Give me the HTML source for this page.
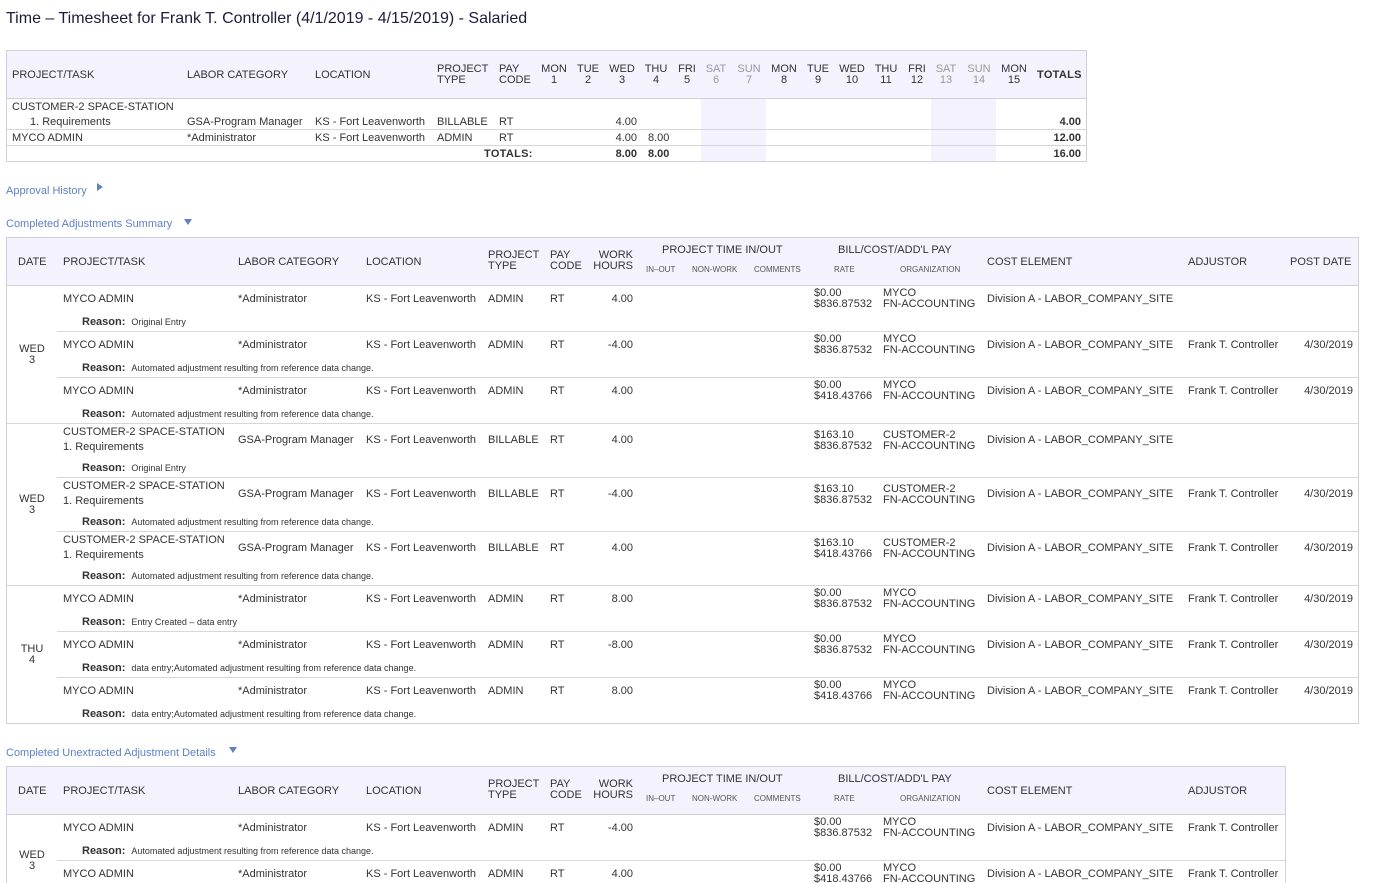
<!DOCTYPE html>
<html><head><meta charset="utf-8"><style>
html,body{margin:0;height:883px;overflow:hidden}
body{background:#fff;width:1378px;position:relative;font-family:"Liberation Sans",sans-serif;font-size:11px;color:#333}
div,span{position:absolute;white-space:nowrap}
.t{line-height:13px;margin-top:1px}
.box{border:1px solid #d0d0d8;box-sizing:border-box}
.hd{background:#f3f2fd;border-bottom:1px solid #d0d0d8}
.ln{height:1px;background:#d6d6dc}
.lk{color:#5f80c6;font-size:11px}
.tri{width:0;height:0}
.sm{font-size:8px;color:#555;margin-top:1px}
.r{left:0;width:1378px;height:46px}
.r span{line-height:13px;margin-top:1px}
.pt{left:63px}.lc{left:238px}.lo{left:366px}.ty{left:488px}.pc{left:550px}
.wh{left:583px;width:50px;text-align:right}
.rt{left:814px;line-height:11px!important}.og{left:883px;line-height:11px!important}
.ce{left:987px}.ad{left:1188px}.pd{left:1283px;width:70px;text-align:right}
.rs{left:82px;font-size:9px}.rs b{font-size:11px;margin-right:6px}
.dt{text-align:center;width:40px;left:12px;line-height:11px;margin-top:1px}
.h1 div{margin-top:2px}
</style></head><body>
<div class="t" style="left:6px;top:8px;font-size:16px;line-height:19px;color:#1c1c3c">Time – Timesheet for Frank T. Controller (4/1/2019 - 4/15/2019) - Salaried</div>

<!-- table 1 -->
<div class="box" style="left:6px;top:50px;width:1081px;height:112px"></div>
<div class="hd" style="left:7px;top:51px;width:1079px;height:47px"></div>
<div style="left:701px;top:99px;width:65px;height:62px;background:#f3f2fd"></div>
<div style="left:931px;top:99px;width:65px;height:62px;background:#f3f2fd"></div>
<div class="ln" style="left:7px;top:129px;width:1079px"></div>
<div class="ln" style="left:7px;top:145px;width:1079px"></div>
<div class="h1">
<div class="t" style="left:12px;top:67px">PROJECT/TASK</div>
<div class="t" style="left:187px;top:67px">LABOR CATEGORY</div>
<div class="t" style="left:315px;top:67px">LOCATION</div>
<div style="left:437px;top:62px;line-height:11px">PROJECT<br>TYPE</div>
<div style="left:499px;top:62px;line-height:11px">PAY<br>CODE</div>
<div style="left:534px;top:62px;width:40px;text-align:center;line-height:11px">MON<br>1</div>
<div style="left:568px;top:62px;width:40px;text-align:center;line-height:11px">TUE<br>2</div>
<div style="left:602px;top:62px;width:40px;text-align:center;line-height:11px">WED<br>3</div>
<div style="left:636px;top:62px;width:40px;text-align:center;line-height:11px">THU<br>4</div>
<div style="left:667px;top:62px;width:40px;text-align:center;line-height:11px">FRI<br>5</div>
<div style="left:696px;top:62px;width:40px;text-align:center;line-height:11px;color:#999">SAT<br>6</div>
<div style="left:729px;top:62px;width:40px;text-align:center;line-height:11px;color:#999">SUN<br>7</div>
<div style="left:764px;top:62px;width:40px;text-align:center;line-height:11px">MON<br>8</div>
<div style="left:798px;top:62px;width:40px;text-align:center;line-height:11px">TUE<br>9</div>
<div style="left:832px;top:62px;width:40px;text-align:center;line-height:11px">WED<br>10</div>
<div style="left:866px;top:62px;width:40px;text-align:center;line-height:11px">THU<br>11</div>
<div style="left:897px;top:62px;width:40px;text-align:center;line-height:11px">FRI<br>12</div>
<div style="left:926px;top:62px;width:40px;text-align:center;line-height:11px;color:#999">SAT<br>13</div>
<div style="left:959px;top:62px;width:40px;text-align:center;line-height:11px;color:#999">SUN<br>14</div>
<div style="left:994px;top:62px;width:40px;text-align:center;line-height:11px">MON<br>15</div>
<div class="t" style="left:1037px;top:67px;font-weight:bold;letter-spacing:.3px">TOTALS</div>
</div>
<div class="t" style="left:12px;top:100px">CUSTOMER-2 SPACE-STATION</div>
<div class="t" style="left:30px;top:115px">1. Requirements</div>
<div class="t" style="left:187px;top:115px">GSA-Program Manager</div>
<div class="t" style="left:315px;top:115px">KS - Fort Leavenworth</div>
<div class="t" style="left:437px;top:115px">BILLABLE</div>
<div class="t" style="left:499px;top:115px">RT</div>
<div class="t" style="left:597px;top:115px;width:40px;text-align:right">4.00</div>
<div class="t" style="left:1031px;top:115px;width:50px;text-align:right;font-weight:bold">4.00</div>
<div class="t" style="left:12px;top:131px">MYCO ADMIN</div>
<div class="t" style="left:187px;top:131px">*Administrator</div>
<div class="t" style="left:315px;top:131px">KS - Fort Leavenworth</div>
<div class="t" style="left:437px;top:131px">ADMIN</div>
<div class="t" style="left:499px;top:131px">RT</div>
<div class="t" style="left:597px;top:131px;width:40px;text-align:right">4.00</div>
<div class="t" style="left:648px;top:131px">8.00</div>
<div class="t" style="left:1031px;top:131px;width:50px;text-align:right;font-weight:bold">12.00</div>
<div class="t" style="left:484px;top:147px;font-weight:bold;letter-spacing:.3px">TOTALS:</div>
<div class="t" style="left:597px;top:147px;width:40px;text-align:right;font-weight:bold">8.00</div>
<div class="t" style="left:648px;top:147px;font-weight:bold">8.00</div>
<div class="t" style="left:1031px;top:147px;width:50px;text-align:right;font-weight:bold">16.00</div>

<div class="t lk" style="left:6px;top:184px">Approval History</div>
<div class="tri" style="left:97px;top:183px;border-left:6px solid #5f80c6;border-top:4px solid transparent;border-bottom:4px solid transparent"></div>
<div class="t lk" style="left:6px;top:217px">Completed Adjustments Summary</div>
<div class="tri" style="left:184px;top:219px;border-top:6px solid #5f80c6;border-left:4px solid transparent;border-right:4px solid transparent"></div>

<!-- table 2 -->
<div class="box" style="left:6px;top:237px;width:1353px;height:487px"></div>
<div class="hd" style="left:7px;top:238px;width:1351px;height:47px"></div>
<div class="t" style="left:18px;top:255px">DATE</div>
<div class="t" style="left:63px;top:255px">PROJECT/TASK</div>
<div class="t" style="left:238px;top:255px">LABOR CATEGORY</div>
<div class="t" style="left:366px;top:255px">LOCATION</div>
<div style="left:488px;top:250px;line-height:11px">PROJECT<br>TYPE</div>
<div style="left:550px;top:250px;line-height:11px">PAY<br>CODE</div>
<div style="left:583px;top:250px;width:50px;text-align:right;line-height:11px">WORK<br>HOURS</div>
<div class="t" style="left:662px;top:243px">PROJECT TIME IN/OUT</div>
<div class="sm" style="left:646px;top:264px">IN–OUT</div>
<div class="sm" style="left:692px;top:264px">NON-WORK</div>
<div class="sm" style="left:754px;top:264px">COMMENTS</div>
<div class="t" style="left:838px;top:243px">BILL/COST/ADD'L PAY</div>
<div class="sm" style="left:834px;top:264px">RATE</div>
<div class="sm" style="left:900px;top:264px">ORGANIZATION</div>
<div class="t" style="left:987px;top:255px">COST ELEMENT</div>
<div class="t" style="left:1188px;top:255px">ADJUSTOR</div>
<div class="t" style="left:1290px;top:255px">POST DATE</div>

<div class="ln" style="left:57px;top:331px;width:1301px"></div>
<div class="ln" style="left:57px;top:377px;width:1301px"></div>
<div class="ln" style="left:7px;top:423px;width:1351px"></div>
<div class="ln" style="left:57px;top:477px;width:1301px"></div>
<div class="ln" style="left:57px;top:531px;width:1301px"></div>
<div class="ln" style="left:7px;top:585px;width:1351px"></div>
<div class="ln" style="left:57px;top:631px;width:1301px"></div>
<div class="ln" style="left:57px;top:677px;width:1301px"></div>

<div class="dt" style="top:343px">WED<br>3</div>
<div class="dt" style="top:493px">WED<br>3</div>
<div class="dt" style="top:643px">THU<br>4</div>

<div class="r" style="top:285px"><span class="pt" style="top:7px">MYCO ADMIN</span><span class="lc" style="top:7px">*Administrator</span><span class="lo" style="top:7px">KS - Fort Leavenworth</span><span class="ty" style="top:7px">ADMIN</span><span class="pc" style="top:7px">RT</span><span class="wh" style="top:7px">4.00</span><span class="rt" style="top:2px">$0.00<br>$836.87532</span><span class="og" style="top:2px">MYCO<br>FN-ACCOUNTING</span><span class="ce" style="top:7px">Division A - LABOR_COMPANY_SITE</span><span class="rs" style="top:30px"><b>Reason:</b>Original Entry</span></div>
<div class="r" style="top:331px"><span class="pt" style="top:7px">MYCO ADMIN</span><span class="lc" style="top:7px">*Administrator</span><span class="lo" style="top:7px">KS - Fort Leavenworth</span><span class="ty" style="top:7px">ADMIN</span><span class="pc" style="top:7px">RT</span><span class="wh" style="top:7px">-4.00</span><span class="rt" style="top:2px">$0.00<br>$836.87532</span><span class="og" style="top:2px">MYCO<br>FN-ACCOUNTING</span><span class="ce" style="top:7px">Division A - LABOR_COMPANY_SITE</span><span class="ad" style="top:7px">Frank T. Controller</span><span class="pd" style="top:7px">4/30/2019</span><span class="rs" style="top:30px"><b>Reason:</b>Automated adjustment resulting from reference data change.</span></div>
<div class="r" style="top:377px"><span class="pt" style="top:7px">MYCO ADMIN</span><span class="lc" style="top:7px">*Administrator</span><span class="lo" style="top:7px">KS - Fort Leavenworth</span><span class="ty" style="top:7px">ADMIN</span><span class="pc" style="top:7px">RT</span><span class="wh" style="top:7px">4.00</span><span class="rt" style="top:2px">$0.00<br>$418.43766</span><span class="og" style="top:2px">MYCO<br>FN-ACCOUNTING</span><span class="ce" style="top:7px">Division A - LABOR_COMPANY_SITE</span><span class="ad" style="top:7px">Frank T. Controller</span><span class="pd" style="top:7px">4/30/2019</span><span class="rs" style="top:30px"><b>Reason:</b>Automated adjustment resulting from reference data change.</span></div>

<div class="r" style="top:423px"><span class="pt" style="top:1px;line-height:15px!important">CUSTOMER-2 SPACE-STATION<br>1. Requirements</span><span class="lc" style="top:10px">GSA-Program Manager</span><span class="lo" style="top:10px">KS - Fort Leavenworth</span><span class="ty" style="top:10px">BILLABLE</span><span class="pc" style="top:10px">RT</span><span class="wh" style="top:10px">4.00</span><span class="rt" style="top:6px">$163.10<br>$836.87532</span><span class="og" style="top:6px">CUSTOMER-2<br>FN-ACCOUNTING</span><span class="ce" style="top:10px">Division A - LABOR_COMPANY_SITE</span><span class="rs" style="top:38px"><b>Reason:</b>Original Entry</span></div>
<div class="r" style="top:477px"><span class="pt" style="top:1px;line-height:15px!important">CUSTOMER-2 SPACE-STATION<br>1. Requirements</span><span class="lc" style="top:10px">GSA-Program Manager</span><span class="lo" style="top:10px">KS - Fort Leavenworth</span><span class="ty" style="top:10px">BILLABLE</span><span class="pc" style="top:10px">RT</span><span class="wh" style="top:10px">-4.00</span><span class="rt" style="top:6px">$163.10<br>$836.87532</span><span class="og" style="top:6px">CUSTOMER-2<br>FN-ACCOUNTING</span><span class="ce" style="top:10px">Division A - LABOR_COMPANY_SITE</span><span class="ad" style="top:10px">Frank T. Controller</span><span class="pd" style="top:10px">4/30/2019</span><span class="rs" style="top:38px"><b>Reason:</b>Automated adjustment resulting from reference data change.</span></div>
<div class="r" style="top:531px"><span class="pt" style="top:1px;line-height:15px!important">CUSTOMER-2 SPACE-STATION<br>1. Requirements</span><span class="lc" style="top:10px">GSA-Program Manager</span><span class="lo" style="top:10px">KS - Fort Leavenworth</span><span class="ty" style="top:10px">BILLABLE</span><span class="pc" style="top:10px">RT</span><span class="wh" style="top:10px">4.00</span><span class="rt" style="top:6px">$163.10<br>$418.43766</span><span class="og" style="top:6px">CUSTOMER-2<br>FN-ACCOUNTING</span><span class="ce" style="top:10px">Division A - LABOR_COMPANY_SITE</span><span class="ad" style="top:10px">Frank T. Controller</span><span class="pd" style="top:10px">4/30/2019</span><span class="rs" style="top:38px"><b>Reason:</b>Automated adjustment resulting from reference data change.</span></div>

<div class="r" style="top:585px"><span class="pt" style="top:7px">MYCO ADMIN</span><span class="lc" style="top:7px">*Administrator</span><span class="lo" style="top:7px">KS - Fort Leavenworth</span><span class="ty" style="top:7px">ADMIN</span><span class="pc" style="top:7px">RT</span><span class="wh" style="top:7px">8.00</span><span class="rt" style="top:2px">$0.00<br>$836.87532</span><span class="og" style="top:2px">MYCO<br>FN-ACCOUNTING</span><span class="ce" style="top:7px">Division A - LABOR_COMPANY_SITE</span><span class="ad" style="top:7px">Frank T. Controller</span><span class="pd" style="top:7px">4/30/2019</span><span class="rs" style="top:30px"><b>Reason:</b>Entry Created – data entry</span></div>
<div class="r" style="top:631px"><span class="pt" style="top:7px">MYCO ADMIN</span><span class="lc" style="top:7px">*Administrator</span><span class="lo" style="top:7px">KS - Fort Leavenworth</span><span class="ty" style="top:7px">ADMIN</span><span class="pc" style="top:7px">RT</span><span class="wh" style="top:7px">-8.00</span><span class="rt" style="top:2px">$0.00<br>$836.87532</span><span class="og" style="top:2px">MYCO<br>FN-ACCOUNTING</span><span class="ce" style="top:7px">Division A - LABOR_COMPANY_SITE</span><span class="ad" style="top:7px">Frank T. Controller</span><span class="pd" style="top:7px">4/30/2019</span><span class="rs" style="top:30px"><b>Reason:</b>data entry;Automated adjustment resulting from reference data change.</span></div>
<div class="r" style="top:677px"><span class="pt" style="top:7px">MYCO ADMIN</span><span class="lc" style="top:7px">*Administrator</span><span class="lo" style="top:7px">KS - Fort Leavenworth</span><span class="ty" style="top:7px">ADMIN</span><span class="pc" style="top:7px">RT</span><span class="wh" style="top:7px">8.00</span><span class="rt" style="top:2px">$0.00<br>$418.43766</span><span class="og" style="top:2px">MYCO<br>FN-ACCOUNTING</span><span class="ce" style="top:7px">Division A - LABOR_COMPANY_SITE</span><span class="ad" style="top:7px">Frank T. Controller</span><span class="pd" style="top:7px">4/30/2019</span><span class="rs" style="top:30px"><b>Reason:</b>data entry;Automated adjustment resulting from reference data change.</span></div>

<div class="t lk" style="left:6px;top:746px">Completed Unextracted Adjustment Details</div>
<div class="tri" style="left:229px;top:747px;border-top:6px solid #5f80c6;border-left:4px solid transparent;border-right:4px solid transparent"></div>

<!-- table 3 -->
<div class="box" style="left:6px;top:766px;width:1280px;height:140px"></div>
<div class="hd" style="left:7px;top:767px;width:1278px;height:47px"></div>
<div class="t" style="left:18px;top:784px">DATE</div>
<div class="t" style="left:63px;top:784px">PROJECT/TASK</div>
<div class="t" style="left:238px;top:784px">LABOR CATEGORY</div>
<div class="t" style="left:366px;top:784px">LOCATION</div>
<div style="left:488px;top:779px;line-height:11px">PROJECT<br>TYPE</div>
<div style="left:550px;top:779px;line-height:11px">PAY<br>CODE</div>
<div style="left:583px;top:779px;width:50px;text-align:right;line-height:11px">WORK<br>HOURS</div>
<div class="t" style="left:662px;top:772px">PROJECT TIME IN/OUT</div>
<div class="sm" style="left:646px;top:793px">IN–OUT</div>
<div class="sm" style="left:692px;top:793px">NON-WORK</div>
<div class="sm" style="left:754px;top:793px">COMMENTS</div>
<div class="t" style="left:838px;top:772px">BILL/COST/ADD'L PAY</div>
<div class="sm" style="left:834px;top:793px">RATE</div>
<div class="sm" style="left:900px;top:793px">ORGANIZATION</div>
<div class="t" style="left:987px;top:784px">COST ELEMENT</div>
<div class="t" style="left:1188px;top:784px">ADJUSTOR</div>
<div class="ln" style="left:57px;top:860px;width:1228px"></div>
<div class="dt" style="top:849px">WED<br>3</div>
<div class="r" style="top:814px"><span class="pt" style="top:7px">MYCO ADMIN</span><span class="lc" style="top:7px">*Administrator</span><span class="lo" style="top:7px">KS - Fort Leavenworth</span><span class="ty" style="top:7px">ADMIN</span><span class="pc" style="top:7px">RT</span><span class="wh" style="top:7px">-4.00</span><span class="rt" style="top:2px">$0.00<br>$836.87532</span><span class="og" style="top:2px">MYCO<br>FN-ACCOUNTING</span><span class="ce" style="top:7px">Division A - LABOR_COMPANY_SITE</span><span class="ad" style="top:7px">Frank T. Controller</span><span class="rs" style="top:30px"><b>Reason:</b>Automated adjustment resulting from reference data change.</span></div>
<div class="r" style="top:860px;height:23px;overflow:hidden"><span class="pt" style="top:7px">MYCO ADMIN</span><span class="lc" style="top:7px">*Administrator</span><span class="lo" style="top:7px">KS - Fort Leavenworth</span><span class="ty" style="top:7px">ADMIN</span><span class="pc" style="top:7px">RT</span><span class="wh" style="top:7px">4.00</span><span class="rt" style="top:2px">$0.00<br>$418.43766</span><span class="og" style="top:2px">MYCO<br>FN-ACCOUNTING</span><span class="ce" style="top:7px">Division A - LABOR_COMPANY_SITE</span><span class="ad" style="top:7px">Frank T. Controller</span></div>
</body></html>
